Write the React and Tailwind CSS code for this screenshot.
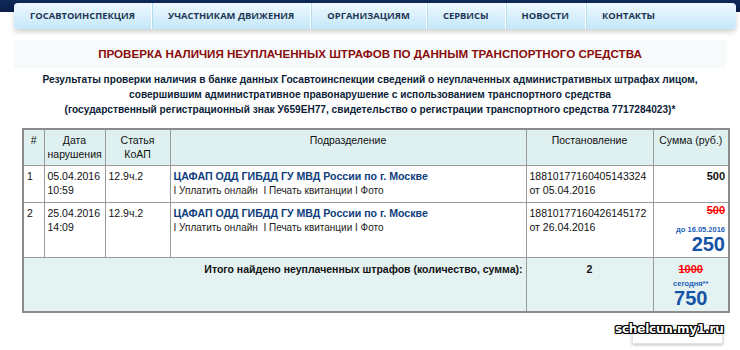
import React from "react";

const navItems = [
  "ГОСАВТОИНСПЕКЦИЯ",
  "УЧАСТНИКАМ ДВИЖЕНИЯ",
  "ОРГАНИЗАЦИЯМ",
  "СЕРВИСЫ",
  "НОВОСТИ",
  "КОНТАКТЫ",
];

function SubLinks() {
  return (
    <div className="text-[10px] leading-[15px] text-[#222]">
      I Уплатить онлайн&nbsp; I Печать квитанции I Фото
    </div>
  );
}

export default function App() {
  const td = "border border-[#9a9a9a] align-top px-[3px] pt-[3px] pb-[4px] leading-[14px]";
  const th = "border border-[#9a9a9a] align-top px-[3px] pt-[3px] pb-[4px] leading-[14px] font-normal text-center";
  return (
    <div className="w-[740px] h-[350px] bg-white overflow-hidden relative font-['Liberation_Sans',Arial,sans-serif] text-[#111]">
      {/* nav */}
      <div className="bg-[linear-gradient(to_bottom,#10295a_0px,#0b1f48_12px,#ffffff_12px)] pt-[3px] pl-[14px] pr-[4px]">
        <div className="h-[26px] rounded-[4px] bg-[linear-gradient(to_bottom,#eef9ff,#c4e7f8)] shadow-[0_3px_5px_rgba(0,0,0,0.18)] flex items-stretch">
          {navItems.map((t, i) => (
            <div
              key={t}
              className={
                "flex items-center px-[16px] font-['Open_Sans',sans-serif] font-bold text-[9.4px] text-[#1d3656] " +
                (i < navItems.length - 1 ? "border-r border-r-white shadow-[1px_0_0_#b4dcef]" : "")
              }
            >
              {t}
            </div>
          ))}
        </div>
      </div>

      {/* title */}
      <div className="mx-[14px] mt-[11px] bg-[#f7fafa] h-[28px] flex items-center justify-center">
        <div className="text-[11.6px] font-bold text-[#8a0c0c] leading-[16px]">
          ПРОВЕРКА НАЛИЧИЯ НЕУПЛАЧЕННЫХ ШТРАФОВ ПО ДАННЫМ ТРАНСПОРТНОГО СРЕДСТВА
        </div>
      </div>

      {/* description */}
      <div className="mt-[4px] text-center text-[10.15px] font-bold leading-[15px] text-[#0c1d38]">
        Результаты проверки наличия в банке данных Госавтоинспекции сведений о неуплаченных административных штрафах лицом,
        <br />
        совершившим административное правонарушение с использованием транспортного средства
        <br />
        (государственный регистрационный знак У659ЕН77, свидетельство о регистрации транспортного средства 7717284023)*
      </div>

      {/* table */}
      <div className="mt-[11px] pl-[22px]">
        <table className="table-fixed border-collapse w-[706px] text-[10.5px] border-2 border-[#8c8c8c]">
          <colgroup>
            <col className="w-[21px]" />
            <col className="w-[61px]" />
            <col className="w-[65px]" />
            <col className="w-[356px]" />
            <col className="w-[127px]" />
            <col className="w-[76px]" />
          </colgroup>
          <thead>
            <tr className="bg-[#dff0f0]">
              <th className={th + " font-bold"}>#</th>
              <th className={th}>Дата<br />нарушения</th>
              <th className={th}>Статья<br />КоАП</th>
              <th className={th}>Подразделение</th>
              <th className={th}>Постановление</th>
              <th className={th}>Сумма (руб.)</th>
            </tr>
          </thead>
          <tbody>
            <tr>
              <td className={td}>1</td>
              <td className={td}>05.04.2016<br />10:59</td>
              <td className={td}>12.9ч.2</td>
              <td className={td}>
                <div className="font-bold text-[10.6px] text-[#0f3d7c]">ЦАФАП ОДД ГИБДД ГУ МВД России по г. Москве</div>
                <SubLinks />
              </td>
              <td className={td}>18810177160405143324<br />от 05.04.2016</td>
              <td className={td + " text-right font-bold text-[11px]"}>500</td>
            </tr>
            <tr>
              <td className={td}>2</td>
              <td className={td}>25.04.2016<br />14:09</td>
              <td className={td}>12.9ч.2</td>
              <td className={td}>
                <div className="font-bold text-[10.6px] text-[#0f3d7c]">ЦАФАП ОДД ГИБДД ГУ МВД России по г. Москве</div>
                <SubLinks />
              </td>
              <td className={td}>18810177160426145172<br />от 26.04.2016</td>
              <td className="border border-[#9a9a9a] align-top px-[3px] pt-0 pb-[4px] text-right">
                <div className="font-bold text-[11px] leading-[14px] text-[#ff0000] line-through">500</div>
                <div className="mt-[8px] font-bold text-[7.5px] leading-[10px] text-[#1d5fb8]">до 16.05.2016</div>
                <div className="font-bold text-[20px] leading-[18px] text-[#1553a6]">250</div>
              </td>
            </tr>
            <tr className="bg-[#e4f2f2]">
              <td colSpan={4} className={td + " pt-[4px] text-right font-bold"}>
                Итого найдено неуплаченных штрафов (количество, сумма):
              </td>
              <td className={td + " pt-[4px] text-center font-bold"}>2</td>
              <td className="border border-[#9a9a9a] align-top px-[3px] pt-[4px] pb-[4px] text-center">
                <div className="font-bold text-[11px] leading-[14px] text-[#ff0000] line-through">1000</div>
                <div className="mt-[3px] font-bold text-[7.5px] leading-[10px] text-[#1d5fb8]">сегодня**</div>
                <div className="font-bold text-[20px] leading-[18px] text-[#1553a6]">750</div>
              </td>
            </tr>
          </tbody>
        </table>
      </div>

      {/* watermark */}
      <div className="absolute left-[632px] top-[325px] w-[91px] h-[19px] bg-white border border-[#e2e2e2] shadow-[0_1px_3px_rgba(0,0,0,0.25)]" />
      <div className="absolute left-[615px] top-[321px] font-['DejaVu_Sans',sans-serif] font-bold text-[12px] leading-[16px] text-white tracking-[-0.2px] [text-shadow:1px_0_0_#000,-1px_0_0_#000,0_1px_0_#000,0_-1px_0_#000,1px_1px_0_#000,-1px_-1px_0_#000,1px_-1px_0_#000,-1px_1px_0_#000]">
        schelcun.my1.ru
      </div>
    </div>
  );
}
